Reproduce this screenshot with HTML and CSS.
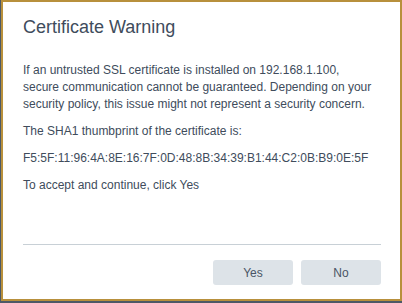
FILE: index.html
```html
<!DOCTYPE html>
<html lang="en">

<head>
    <meta charset="UTF-8">
    <meta name="viewport" content="width=device-width, initial-scale=1.0">
    <title>Certificate Warning</title>
    <link rel="stylesheet" href="styles.css">
</head>

<body>
    <div class="cert-dialog">
        <h1>Certificate Warning</h1>
        <div class="cert-body">
            <p>If an untrusted SSL certificate is installed on 192.168.1.100, secure communication cannot be guaranteed. Depending on your security policy, this issue might not represent a security concern.</p>
            <p>The SHA1 thumbprint of the certificate is:</p>
            <p>F5:5F:11:96:4A:8E:16:7F:0D:48:8B:34:39:B1:44:C2:0B:B9:0E:5F</p>
            <p>To accept and continue, click Yes</p>
        </div>
        <div class="button-container">
            <button id="yes" type="button">Yes</button>
            <button id="no" type="button">No</button>
        </div>
    </div>
</body>

</html>
```

FILE: styles.css
```css
body {
    font-family: "Liberation Sans", Arial, sans-serif;
    margin: 0;
    padding: 0;
    background-color: #4d5966;
    height: 303px;
    overflow: hidden;
}

.cert-dialog {
    box-sizing: border-box;
    width: 401px;
    height: 301px;
    margin-left: 1px;
    padding: 15px 19px 14px 20px;
    background-color: white;
    border: 2px solid #b8903c;
    display: flex;
    flex-direction: column;
    color: #404c5c;
}

.cert-dialog h1 {
    font-size: 18px;
    font-weight: normal;
    margin: 0;
    line-height: 21px;
}

.cert-body {
    flex: 1;
    margin-top: 24px;
    border-bottom: 1px solid #c8d0d6;
}

.cert-body p {
    font-size: 12px;
    line-height: 17px;
    margin: 0 8px 10px 0;
}

.button-container {
    display: flex;
    justify-content: flex-end;
    gap: 8px;
    margin-top: 15px;
}

.button-container button {
    width: 80px;
    height: 25px;
    border: none;
    border-radius: 3px;
    background-color: #dde3e8;
    color: #4a5566;
    font-family: inherit;
    font-size: 12px;
    cursor: pointer;
}
```
